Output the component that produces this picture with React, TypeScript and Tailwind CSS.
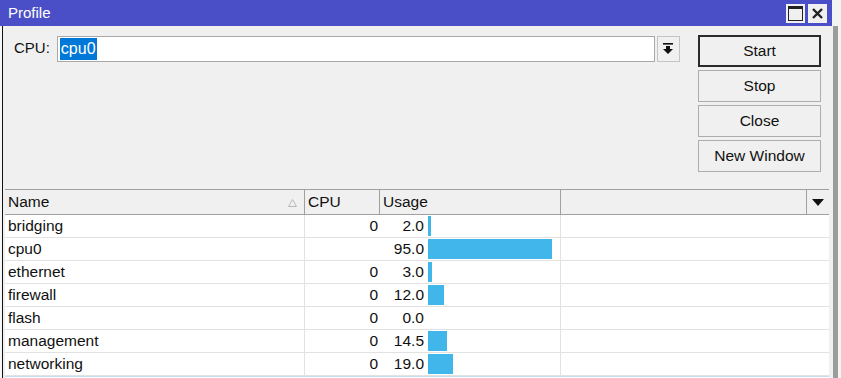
import React from "react";

type ProfileRow = {
  name: string;
  cpu: string;
  usage: number;
};

const rows: ProfileRow[] = [
  { name: "bridging", cpu: "0", usage: 2.0 },
  { name: "cpu0", cpu: "", usage: 95.0 },
  { name: "ethernet", cpu: "0", usage: 3.0 },
  { name: "firewall", cpu: "0", usage: 12.0 },
  { name: "flash", cpu: "0", usage: 0.0 },
  { name: "management", cpu: "0", usage: 14.5 },
  { name: "networking", cpu: "0", usage: 19.0 },
];

const font = { fontFamily: '"Liberation Sans", Arial, sans-serif' };

const WinButton = ({ label, primary }: { label: string; primary?: boolean }) => (
  <button
    className={
      "h-[32px] w-[123px] bg-[#f0f0f0] text-[15.5px] text-[#111] " +
      (primary ? "border-2 border-[#2b2b2b]" : "border border-[#adadad]")
    }
  >
    {label}
  </button>
);

export default function App() {
  return (
    <div
      className="flex h-[378px] w-[841px] flex-col overflow-hidden bg-white text-[15.5px] text-[#111]"
      style={font}
    >
      {/* barra de título */}
      <div className="flex h-[26px] shrink-0">
        <div className="flex w-[832px] items-center justify-between bg-[#4b4fc7] pl-[8px] pr-[5px]">
          <span className="text-[15px] text-white">Profile</span>
          <div className="flex gap-[3px]">
            <div className="flex h-[19px] w-[19px] items-center justify-center bg-[#f0f0f0]">
              <svg width="15" height="15" viewBox="0 0 15 15">
                <rect x="0.5" y="0.5" width="14" height="14" fill="none" stroke="#222" />
                <rect x="0" y="0" width="15" height="3" fill="#222" />
              </svg>
            </div>
            <div className="flex h-[19px] w-[19px] items-center justify-center bg-[#f0f0f0]">
              <svg width="13" height="13" viewBox="0 0 13 13">
                <path d="M2 2 L11 11 M11 2 L2 11" stroke="#222" strokeWidth="2.4" />
              </svg>
            </div>
          </div>
        </div>
        <div className="flex-1 bg-[#f4f4f4]" />
      </div>

      <div className="flex flex-1">
        <div className="w-[2px] bg-[#f7f7f7]" />
        <div className="w-[1px] bg-[#111]" />

        {/* contenido */}
        <div className="flex w-[828px] flex-col bg-[#f0f0f0]">
          <div className="flex h-[163px] shrink-0 pl-[11px] pr-[10px] pt-[9px]">
            <div className="flex h-[26px] items-center pt-[1px]">
              <span className="mr-[7px] text-[15px]">CPU:</span>
              <div className="flex h-[26px] w-[598px] items-center border border-[#a9a9a9] bg-white pl-[2px]">
                <span className="flex h-[22px] items-center bg-[#0078d7] px-[1px] text-[16px] text-white">
                  cpu0
                </span>
              </div>
              <div className="ml-[2px] flex h-[26px] w-[23px] items-center justify-center border border-[#c4c4c4] bg-[#f0f0f0]">
                <svg width="10" height="11" viewBox="0 0 10 11">
                  <rect x="0" y="0" width="10" height="1.6" fill="#111" />
                  <path d="M3 3 H7 V6 H10 L5 11 L0 6 H3 Z" fill="#111" />
                </svg>
              </div>
            </div>
            <div className="ml-auto flex flex-col gap-[3px]">
              <WinButton label="Start" primary />
              <WinButton label="Stop" />
              <WinButton label="Close" />
              <WinButton label="New Window" />
            </div>
          </div>

          {/* tabla */}
          <div className="ml-[2px] flex w-[824px] flex-1 flex-col bg-white">
            <div className="flex h-[26px] shrink-0 border-y border-[#a0a0a0] bg-[#f0f0f0]">
              <div className="relative flex w-[300px] items-center border-r border-[#a0a0a0] pl-[3px]">
                Name
                <svg className="absolute right-[7px] top-[9px]" width="9" height="8" viewBox="0 0 9 8">
                  <path d="M4.5 0.5 L8.5 7.5 H0.5 Z" fill="none" stroke="#b8b8b8" />
                </svg>
              </div>
              <div className="flex w-[75px] items-center border-r border-[#a0a0a0] pl-[3px]">CPU</div>
              <div className="flex w-[181px] items-center border-r border-[#a0a0a0] pl-[3px]">Usage</div>
              <div className="w-[246px] border-r border-[#a0a0a0]" />
              <div className="flex flex-1 items-center justify-center">
                <svg width="12" height="7" viewBox="0 0 12 7">
                  <path d="M0 0 H12 L6 7 Z" fill="#111" />
                </svg>
              </div>
            </div>
            {rows.map((row) => (
              <div key={row.name} className="flex h-[23px] shrink-0 border-b border-[#e2e2e2]">
                <div className="flex w-[300px] items-center border-r border-[#e2e2e2] pl-[3px]">
                  {row.name}
                </div>
                <div className="flex w-[75px] items-center justify-end pr-[2px]">{row.cpu}</div>
                <div className="flex w-[181px] items-center border-r border-[#e2e2e2]">
                  <span className="w-[44px] text-right">{row.usage.toFixed(1)}</span>
                  <div
                    className="ml-[4px] h-[20px] bg-[#41b6ea]"
                    style={{ width: Math.round(row.usage * 1.3) }}
                  />
                </div>
                <div className="flex-1" />
              </div>
            ))}
            <div className="flex-1 border-t border-[#c9dced]" />
          </div>
        </div>

        <div className="w-[2px] bg-[#f0f0f0]" />
        <div className="w-[5px] bg-[#9c9c9c]" />
        <div className="flex-1 bg-[#f4f4f4]" />
      </div>
    </div>
  );
}
